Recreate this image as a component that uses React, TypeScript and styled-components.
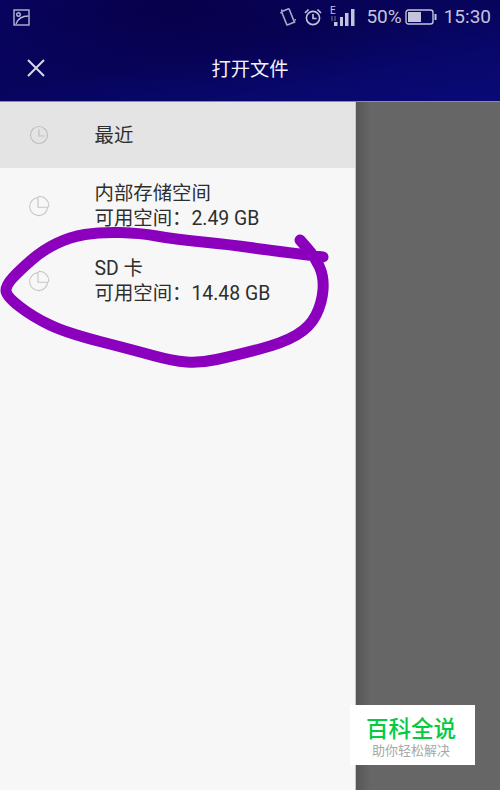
import * as React from 'react';
import styled, { createGlobalStyle } from 'styled-components';

const GlobalStyle = createGlobalStyle`
  html, body {
    margin: 0;
    padding: 0;
    background: #666;
  }
  body {
    font-family: Roboto, "Noto Sans CJK SC", sans-serif;
  }
`;

const Screen = styled.div`
  position: relative;
  width: 500px;
  height: 790px;
  display: flex;
  flex-direction: column;
  overflow: hidden;
`;

const Header = styled.header`
  height: 102px;
  flex: none;
  border-bottom: 1px solid #8a8ab0;
  box-sizing: border-box;
  display: flex;
  flex-direction: column;
  background:
    radial-gradient(ellipse at 35% 10%, #07004a 0%, rgba(7, 0, 74, 0) 60%),
    linear-gradient(170deg, #08066a 0%, #07045c 45%, #090a78 100%);
`;

const StatusBar = styled.div`
  height: 34px;
  flex: none;
  display: flex;
  align-items: center;
  padding: 0 9px 0 13px;
  color: #c3c3dc;
`;

const StatusIcons = styled.div`
  margin-left: auto;
  display: flex;
  align-items: center;
  gap: 8px;
`;

const StatusText = styled.span<{ $left: number }>`
  font-size: 19px;
  margin-left: ${p => p.$left}px;
  line-height: 34px;
`;

const TitleRow = styled.div`
  flex: 1;
  display: flex;
  align-items: center;
  padding: 0 0 0 26px;
`;

const Title = styled.div`
  flex: 1;
  text-align: center;
  margin-right: 46px;
  color: #f2f2f8;
  font-size: 19.3px;
`;

const Body = styled.main`
  flex: 1;
  display: flex;
  min-height: 0;
`;

const Drawer = styled.nav`
  width: 356px;
  flex: none;
  background: #f7f7f7;
  border-right: 1px solid #c4c4c4;
  box-sizing: border-box;
`;

const Shade = styled.div`
  flex: 1;
  background: linear-gradient(90deg, #565656 0, #666 14px);
`;

const Row = styled.div<{ $active?: boolean; $tall?: boolean }>`
  height: ${p => (p.$tall ? 75 : 66)}px;
  display: flex;
  align-items: center;
  background: ${p => (p.$active ? '#e4e4e4' : 'transparent')};
  color: #2e2e2e;
`;

const IconSlot = styled.div`
  width: 94.5px;
  flex: none;
  display: flex;
  justify-content: center;
  padding-right: 17px;
  box-sizing: border-box;
`;

const RowText = styled.div`
  font-size: 19.4px;
  line-height: 25px;
`;

const Scribble = styled.svg`
  position: absolute;
  left: 0;
  top: 0;
  pointer-events: none;
`;

const Watermark = styled.div`
  position: absolute;
  left: 350px;
  top: 705px;
  width: 125px;
  height: 60px;
  background: #fff;
  display: flex;
  flex-direction: column;
  align-items: center;
  padding: 11px 3px 0 0;
  box-sizing: border-box;
`;

const MarkTitle = styled.div`
  color: #05cb42;
  font-size: 22.5px;
  line-height: 27px;
  font-weight: 500;
`;

const MarkSub = styled.div`
  color: #a8a8a8;
  font-size: 13px;
  line-height: 16px;
`;

const ClockIcon = () => (
  <svg width="20" height="20" viewBox="0 0 20 20" fill="none" stroke="#c0c0c0" strokeWidth="1.2">
    <circle cx="10" cy="10" r="8.5" />
    <path d="M10 4.5V11H15.5" />
  </svg>
);

const PieIcon = () => (
  <svg width="22" height="22" viewBox="0 0 22 22" fill="none" stroke="#c6c6c6" strokeWidth="1.1">
    <path d="M10 2.6A9 9 0 1 0 19.6 12.2" />
    <path d="M10 2.6L11.2 1.3A9.6 9.6 0 0 1 20.8 11.2L19.6 12.2H10V2.6" />
  </svg>
);

// outline of the hand drawn ring, smoothed through the midpoints
const ringPoints = [
  [323, 257], [267, 250], [233, 245], [173, 239], [140, 233], [100, 232], [70, 237], [43, 250],
  [20, 270], [6, 285], [6, 296], [33, 317], [67, 333], [133, 350], [173, 361], [200, 363],
  [233, 356], [283, 343], [310, 327], [322, 303], [324, 277], [315, 257], [300, 240],
];

const ringPath = ringPoints.reduce((d, [x, y], i) => {
  if (i === 0) return `M${x} ${y}`;
  if (i === ringPoints.length - 1) return `${d} L${x} ${y}`;
  const [nx, ny] = ringPoints[i + 1];
  return `${d} Q${x} ${y} ${(x + nx) / 2} ${(y + ny) / 2}`;
}, '');

export default function App() {
  return (
    <Screen>
      <GlobalStyle />
      <Header>
        <StatusBar>
          <svg width="17" height="17" viewBox="0 0 17 17" fill="none" stroke="#b4b4d0" strokeWidth="1.4">
            <rect x="1" y="1" width="15" height="15" />
            <circle cx="5.5" cy="5.5" r="1.8" />
            <path d="M3 15C5 9 9 7 15.5 7" />
          </svg>
          <StatusIcons>
            <svg width="16" height="18" viewBox="0 0 16 18" fill="none" stroke="#a8a8c8" strokeWidth="1.6">
              <rect x="4" y="1.6" width="8" height="14.5" rx="1" transform="rotate(-22 8 9)" />
              <path d="M2 1.5L.4 6.5M15.6 11L14 16" strokeDasharray="1.6 1" />
            </svg>
            <svg width="18" height="18" viewBox="0 0 18 18" fill="none" stroke="#c3c3dc" strokeWidth="1.6">
              <circle cx="9" cy="10" r="6.6" />
              <path d="M9 6V10.5H12.5M1 5L4.5 1.5M17 5L13.5 1.5" />
            </svg>
            <svg width="25" height="22" viewBox="0 0 25 22" fill="#c3c3dc">
              <text x="0" y="8" fontSize="10" fontFamily="Roboto">E</text>
              <path d="M2 10v5M5 10v5" stroke="#55558c" strokeWidth="1.4" />
              <rect x="4" y="16" width="3.5" height="4" />
              <rect x="10" y="11" width="3" height="9" />
              <rect x="15" y="7" width="3.5" height="13" />
              <rect x="21" y="3" width="3.5" height="17" />
            </svg>
            <StatusText $left={3}>50%</StatusText>
            <svg style={{ marginLeft: -5 }} width="32" height="16" viewBox="0 0 32 16" fill="none">
              <rect x="1" y="1" width="27" height="14" rx="2.5" stroke="#c3c3dc" strokeWidth="1.4" />
              <rect x="3" y="3" width="13" height="10" fill="#c3c3dc" />
              <rect x="29.5" y="5" width="2" height="6" fill="#c3c3dc" />
            </svg>
            <StatusText $left={-1}>15:30</StatusText>
          </StatusIcons>
        </StatusBar>
        <TitleRow>
          <svg width="20" height="20" viewBox="0 0 20 20" stroke="#d8d8e6" strokeWidth="2" fill="none">
            <path d="M2 2L18 18M18 2L2 18" />
          </svg>
          <Title>打开文件</Title>
        </TitleRow>
      </Header>
      <Body>
        <Drawer>
          <Row $active>
            <IconSlot><ClockIcon /></IconSlot>
            <RowText>最近</RowText>
          </Row>
          <Row $tall>
            <IconSlot><PieIcon /></IconSlot>
            <RowText>
              内部存储空间
              <br />
              可用空间：2.49 GB
            </RowText>
          </Row>
          <Row $tall>
            <IconSlot><PieIcon /></IconSlot>
            <RowText>
              SD 卡
              <br />
              可用空间：14.48 GB
            </RowText>
          </Row>
        </Drawer>
        <Shade />
      </Body>
      <Scribble width="500" height="790" viewBox="0 0 500 790" fill="none">
        <path d={ringPath} stroke="#8a00bd" strokeWidth="11" strokeLinecap="round" strokeLinejoin="round" />
      </Scribble>
      <Watermark>
        <MarkTitle>百科全说</MarkTitle>
        <MarkSub>助你轻松解决</MarkSub>
      </Watermark>
    </Screen>
  );
}
